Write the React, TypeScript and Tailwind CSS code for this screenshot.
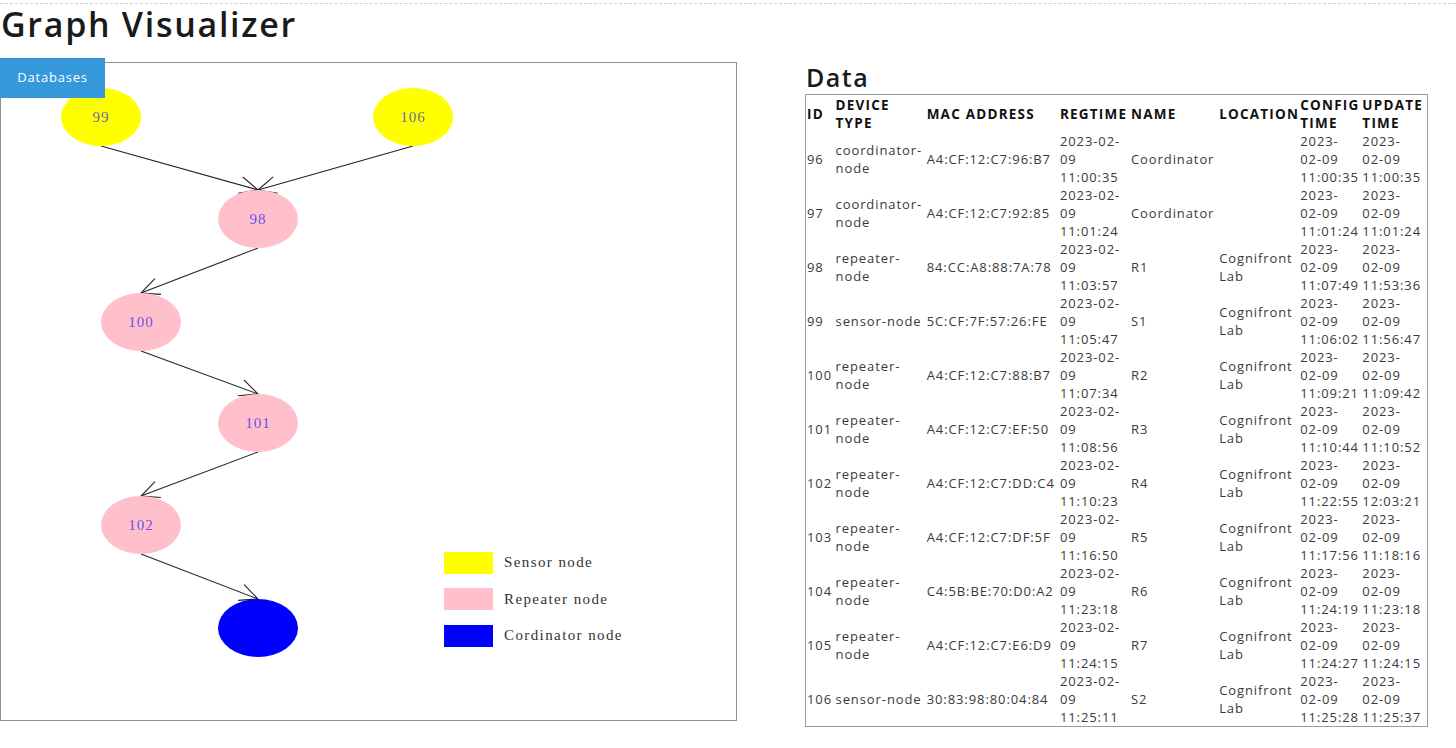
import React from "react";

type Row = {
  id: string;
  type: string[];
  mac: string;
  reg: string;
  name: string;
  loc: string[];
  cfg: string;
  upd: string;
};

const rows: Row[] = [
  { id: "96", type: ["coordinator-", "node"], mac: "A4:CF:12:C7:96:B7", reg: "11:00:35", name: "Coordinator", loc: [], cfg: "11:00:35", upd: "11:00:35" },
  { id: "97", type: ["coordinator-", "node"], mac: "A4:CF:12:C7:92:85", reg: "11:01:24", name: "Coordinator", loc: [], cfg: "11:01:24", upd: "11:01:24" },
  { id: "98", type: ["repeater-", "node"], mac: "84:CC:A8:88:7A:78", reg: "11:03:57", name: "R1", loc: ["Cognifront", "Lab"], cfg: "11:07:49", upd: "11:53:36" },
  { id: "99", type: ["sensor-node"], mac: "5C:CF:7F:57:26:FE", reg: "11:05:47", name: "S1", loc: ["Cognifront", "Lab"], cfg: "11:06:02", upd: "11:56:47" },
  { id: "100", type: ["repeater-", "node"], mac: "A4:CF:12:C7:88:B7", reg: "11:07:34", name: "R2", loc: ["Cognifront", "Lab"], cfg: "11:09:21", upd: "11:09:42" },
  { id: "101", type: ["repeater-", "node"], mac: "A4:CF:12:C7:EF:50", reg: "11:08:56", name: "R3", loc: ["Cognifront", "Lab"], cfg: "11:10:44", upd: "11:10:52" },
  { id: "102", type: ["repeater-", "node"], mac: "A4:CF:12:C7:DD:C4", reg: "11:10:23", name: "R4", loc: ["Cognifront", "Lab"], cfg: "11:22:55", upd: "12:03:21" },
  { id: "103", type: ["repeater-", "node"], mac: "A4:CF:12:C7:DF:5F", reg: "11:16:50", name: "R5", loc: ["Cognifront", "Lab"], cfg: "11:17:56", upd: "11:18:16" },
  { id: "104", type: ["repeater-", "node"], mac: "C4:5B:BE:70:D0:A2", reg: "11:23:18", name: "R6", loc: ["Cognifront", "Lab"], cfg: "11:24:19", upd: "11:23:18" },
  { id: "105", type: ["repeater-", "node"], mac: "A4:CF:12:C7:E6:D9", reg: "11:24:15", name: "R7", loc: ["Cognifront", "Lab"], cfg: "11:24:27", upd: "11:24:15" },
  { id: "106", type: ["sensor-node"], mac: "30:83:98:80:04:84", reg: "11:25:11", name: "S2", loc: ["Cognifront", "Lab"], cfg: "11:25:28", upd: "11:25:37" },
];

type Node = { id: string; x: number; y: number; fill: string; label: string };
const RX = 40;
const RY = 29;
const nodes: Record<string, Node> = {
  n99: { id: "n99", x: 101, y: 117, fill: "#ffff00", label: "99" },
  n106: { id: "n106", x: 413, y: 117, fill: "#ffff00", label: "106" },
  n98: { id: "n98", x: 258, y: 219, fill: "#ffc0cb", label: "98" },
  n100: { id: "n100", x: 141, y: 322, fill: "#ffc0cb", label: "100" },
  n101: { id: "n101", x: 258, y: 423, fill: "#ffc0cb", label: "101" },
  n102: { id: "n102", x: 141, y: 525, fill: "#ffc0cb", label: "102" },
  n96: { id: "n96", x: 258, y: 628, fill: "#0000ff", label: "" },
};
const edges: [string, string][] = [
  ["n99", "n98"],
  ["n106", "n98"],
  ["n98", "n100"],
  ["n100", "n101"],
  ["n101", "n102"],
  ["n102", "n96"],
];

function Edge({ from, to }: { from: Node; to: Node }) {
  const x1 = from.x;
  const y1 = from.y + RY;
  const x2 = to.x;
  const y2 = to.y - RY;
  const back = Math.atan2(y1 - y2, x1 - x2);
  const L = 20;
  const a = (25 * Math.PI) / 180;
  const w1x = x2 + L * Math.cos(back - a);
  const w1y = y2 + L * Math.sin(back - a);
  const w2x = x2 + L * Math.cos(back + a);
  const w2y = y2 + L * Math.sin(back + a);
  return (
    <g stroke="#222" strokeWidth={1.1} fill="none">
      <line x1={x1} y1={y1} x2={x2} y2={y2} />
      <polyline points={`${w1x},${w1y} ${x2},${y2} ${w2x},${w2y}`} />
    </g>
  );
}

function Graph() {
  return (
    <svg width={735} height={657} viewBox="1 63 735 657" className="block">
      {edges.map(([a, b]) => (
        <Edge key={a + b} from={nodes[a]} to={nodes[b]} />
      ))}
      {Object.values(nodes).map((n) => (
        <g key={n.id}>
          <ellipse cx={n.x} cy={n.y} rx={RX} ry={RY} fill={n.fill} />
          {n.label && (
            <text
              x={n.x}
              y={n.y + 5}
              textAnchor="middle"
              fontFamily="'Liberation Serif', serif"
              fontSize={15}
              letterSpacing={1}
              fill="#0000ff"
              fillOpacity={0.62}
            >
              {n.label}
            </text>
          )}
        </g>
      ))}
      <rect x={444} y={552} width={49} height={22} fill="#ffff00" />
      <rect x={444} y={588} width={49} height={22} fill="#ffc0cb" />
      <rect x={444} y={625} width={49} height={22} fill="#0000ff" />
      <g fontFamily="'Liberation Serif', serif" fontSize={15} letterSpacing={1.4} fill="#333">
        <text x={504} y={567}>Sensor node</text>
        <text x={504} y={604}>Repeater node</text>
        <text x={504} y={640}>Cordinator node</text>
      </g>
    </svg>
  );
}

function Lines({ lines }: { lines: string[] }) {
  return (
    <>
      {lines.map((l, i) => (
        <div key={i}>{l}</div>
      ))}
    </>
  );
}

export default function App() {
  const td = "px-[1px] py-0 align-middle whitespace-nowrap";
  const th =
    "px-[1px] py-0 align-middle whitespace-nowrap text-left font-bold text-[#111] text-[13.5px] tracking-[0.09em]";
  return (
    <div
      className="w-[1456px] h-[748px] bg-white overflow-hidden text-[#3a3a3a]"
      style={{ fontFamily: "'Segoe UI', 'Open Sans', 'Noto Sans', sans-serif" }}
    >
      <div className="h-[3px]" />
      <div className="border-t border-dashed border-[#d0d0d0]" />
      <h1 className="text-[34px] leading-[40px] font-semibold tracking-[0.05em] text-[#1a1a1a] pl-[1px]">
        Graph Visualizer
      </h1>
      <div className="flex mt-[14px]">
        <div className="relative w-[737px] pt-[4px]">
          <div className="border border-[#8f8f8f] w-[737px] h-[659px]">
            <Graph />
          </div>
          <div className="absolute left-0 top-0 w-[105px] h-[40px] bg-[#3498db] text-white text-[13px] tracking-[0.06em] flex items-center justify-center">
            Databases
          </div>
        </div>
        <div className="ml-[68px] mt-[4px]">
          <h2 className="text-[25px] leading-[30px] font-semibold tracking-[0.06em] text-[#1a1a1a] pl-[1px]">
            Data
          </h2>
          <table className="table-fixed border border-[#9a9a9a] text-[13px] tracking-[0.07em] leading-[18px] mt-[2px] w-[623px]">
            <colgroup>
              <col className="w-[29px]" />
              <col className="w-[91px]" />
              <col className="w-[133px]" />
              <col className="w-[71px]" />
              <col className="w-[88px]" />
              <col className="w-[81px]" />
              <col className="w-[62px]" />
              <col className="w-[66px]" />
            </colgroup>
            <thead>
              <tr>
                <th className={th + " pt-[1px]"}>ID</th>
                <th className={th + " pt-[1px]"}>
                  <div>DEVICE</div>
                  <div>TYPE</div>
                </th>
                <th className={th + " pt-[1px]"}>MAC ADDRESS</th>
                <th className={th + " pt-[1px]"}>REGTIME</th>
                <th className={th + " pt-[1px]"}>NAME</th>
                <th className={th + " pt-[1px]"}>LOCATION</th>
                <th className={th + " pt-[1px]"}>
                  <div>CONFIG</div>
                  <div>TIME</div>
                </th>
                <th className={th + " pt-[1px]"}>
                  <div>UPDATE</div>
                  <div>TIME</div>
                </th>
              </tr>
            </thead>
            <tbody>
              {rows.map((r) => (
                <tr key={r.id}>
                  <td className={td}>{r.id}</td>
                  <td className={td}>
                    <Lines lines={r.type} />
                  </td>
                  <td className={td}>{r.mac}</td>
                  <td className={td}>
                    <div>2023-02-</div>
                    <div>09</div>
                    <div>{r.reg}</div>
                  </td>
                  <td className={td}>{r.name}</td>
                  <td className={td}>
                    <Lines lines={r.loc} />
                  </td>
                  <td className={td}>
                    <div>2023-</div>
                    <div>02-09</div>
                    <div>{r.cfg}</div>
                  </td>
                  <td className={td}>
                    <div>2023-</div>
                    <div>02-09</div>
                    <div>{r.upd}</div>
                  </td>
                </tr>
              ))}
            </tbody>
          </table>
        </div>
      </div>
    </div>
  );
}
